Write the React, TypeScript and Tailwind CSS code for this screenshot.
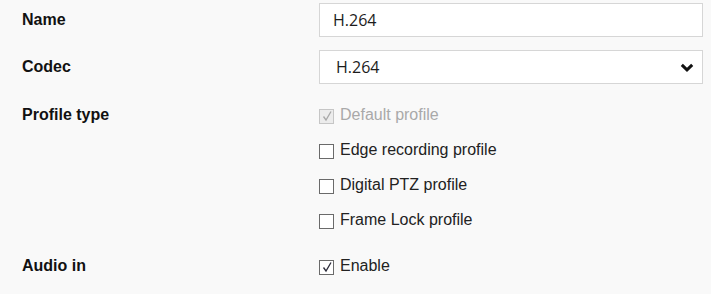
import { useState } from 'react';

const PROFILES = [
  { label: 'Default profile', checked: true, disabled: true },
  { label: 'Edge recording profile', checked: false, disabled: false },
  { label: 'Digital PTZ profile', checked: false, disabled: false },
  { label: 'Frame Lock profile', checked: false, disabled: false },
];

function Check({ checked, disabled, label, onToggle }: { checked: boolean; disabled?: boolean; label: string; onToggle?: () => void }) {
  return (
    <label className="flex items-center h-[35px] cursor-pointer select-none" onClick={disabled ? undefined : onToggle}>
      <span
        className={
          disabled
            ? 'mt-[3px] w-[15px] h-[15px] border border-[#c6c6c6] bg-[#ececec] flex items-center justify-center'
            : 'mt-[3px] w-[15px] h-[15px] border border-[#6a6a6a] bg-white flex items-center justify-center'
        }
      >
        {checked && (
          <svg width="12" height="12" viewBox="0 0 12 12">
            <path d="M2.5 6.5 L5 10 L10 1.5" fill="none" stroke={disabled ? '#a8a8a8' : '#2b2b3a'} strokeWidth="1.3" />
          </svg>
        )}
      </span>
      <span className={disabled ? 'ml-[6px] text-[16px] leading-[18px] text-[#a9a9a9]' : 'ml-[6px] text-[16px] leading-[18px] text-[#222]'}>
        {label}
      </span>
    </label>
  );
}

export default function App() {
  const [profiles, setProfiles] = useState(PROFILES);
  const [audio, setAudio] = useState(true);

  return (
    <div className="w-[711px] h-[294px] bg-[#f9f9f9] font-['Liberation_Sans',Arial,sans-serif] pl-[22px] pt-[3px] overflow-hidden">
      {/* Name */}
      <div className="grid grid-cols-[297px_384px] items-center">
        <div className="text-[16px] font-bold text-[#111]">Name</div>
        <input
          defaultValue="H.264"
          className="h-[34px] border border-[#d6d6d6] bg-white pl-[13px] text-[16px] text-[#1c1c1c] font-['Open_Sans',sans-serif] outline-none"
        />
      </div>

      {/* Codec */}
      <div className="grid grid-cols-[297px_384px] items-center mt-[13px]">
        <div className="text-[16px] font-bold text-[#111]">Codec</div>
        <div className="relative h-[34px] border border-[#d6d6d6] bg-white flex items-center pl-[16px] text-[16px] text-[#1c1c1c] font-['Open_Sans',sans-serif]">
          H.264
          <svg className="absolute right-[8px] top-[12px]" width="14" height="9" viewBox="0 0 14 9">
            <path d="M1.8 1.8 L7 6.8 L12.2 1.8" fill="none" stroke="#111" strokeWidth="3" />
          </svg>
        </div>
      </div>

      {/* Profile type */}
      <div className="grid grid-cols-[297px_384px] mt-[13px]">
        <div className="h-[35px] flex items-center text-[16px] font-bold text-[#111]">Profile type</div>
        <div className="flex flex-col">
          {profiles.map((p, i) => (
            <Check
              key={p.label}
              label={p.label}
              checked={p.checked}
              disabled={p.disabled}
              onToggle={() => setProfiles(profiles.map((q, j) => (j === i ? { ...q, checked: !q.checked } : q)))}
            />
          ))}
        </div>
      </div>

      {/* Audio in */}
      <div className="grid grid-cols-[297px_384px] mt-[11px]">
        <div className="h-[35px] flex items-center text-[16px] font-bold text-[#111]">Audio in</div>
        <Check label="Enable" checked={audio} onToggle={() => setAudio(!audio)} />
      </div>
    </div>
  );
}
